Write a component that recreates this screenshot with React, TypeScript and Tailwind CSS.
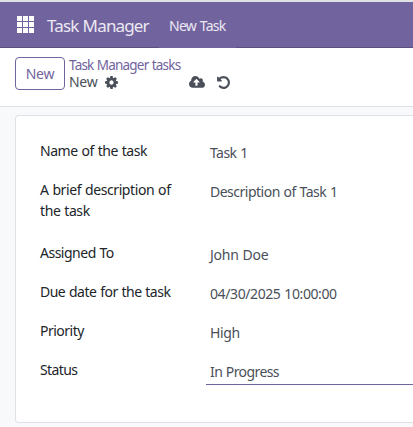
const FONT = "font-['Noto_Sans','Open_Sans',sans-serif]";

type Field = { label: string; value: string; height: string; labelSpacing: string; valueSpacing: string; active?: boolean };

const fields: Field[] = [
  { label: "Name of the task", value: "Task 1", height: "h-[39px]", labelSpacing: "tracking-[-0.45px]", valueSpacing: "tracking-[-0.55px]" },
  { label: "A brief description of the task", value: "Description of Task 1", height: "h-[63px]", labelSpacing: "tracking-[-0.4px]", valueSpacing: "tracking-[-0.5px]" },
  { label: "Assigned To", value: "John Doe", height: "h-[39px]", labelSpacing: "tracking-[-0.5px]", valueSpacing: "tracking-[-0.25px]" },
  { label: "Due date for the task", value: "04/30/2025 10:00:00", height: "h-[39px]", labelSpacing: "tracking-[-0.5px]", valueSpacing: "tracking-[-0.4px]" },
  { label: "Priority", value: "High", height: "h-[39px]", labelSpacing: "tracking-[-0.5px]", valueSpacing: "tracking-[-0.4px]" },
  { label: "Status", value: "In Progress", height: "h-[39px]", labelSpacing: "tracking-[-0.6px]", valueSpacing: "tracking-[-0.6px]", active: true },
];

function Cog() {
  return (
    <svg className="block size-[15px]" viewBox="0 0 1792 1792" fill="currentColor">
      <path d="M1152 896q0-106-75-181t-181-75-181 75-75 181 75 181 181 75 181-75 75-181zm512-109v222q0 12-8 23t-20 13l-185 28q-19 54-39 91 35 50 107 138 10 12 10 25t-9 23q-27 37-99 108t-94 71q-12 0-26-9l-138-108q-44 23-91 38-16 136-29 186-7 28-36 28h-222q-14 0-24.5-8.5t-11.5-21.5l-28-184q-49-16-90-37l-141 107q-10 9-25 9-14 0-25-11-126-114-165-168-7-10-7-23 0-12 8-23 15-21 51-66.5t54-70.5q-27-50-41-99l-183-27q-13-2-21-12.5t-8-23.5v-222q0-12 8-23t19-13l186-28q14-46 39-92-40-57-107-138-10-12-10-24 0-10 9-23 26-36 98.5-107.5t94.5-71.5q13 0 26 10l138 107q44-23 91-38 16-136 29-186 7-28 36-28h222q14 0 24.5 8.5t11.5 21.5l28 184q49 16 90 37l142-107q9-9 24-9 13 0 25 10 129 119 165 170 7 8 7 22 0 12-8 23-15 21-51 66.5t-54 70.5q26 50 41 98l183 28q13 2 21 12.5t8 23.5z" />
    </svg>
  );
}

function CloudUpload() {
  return (
    <svg className="block h-[15px] w-4" viewBox="-64 0 1920 1792" fill="currentColor">
      <path d="M1216 864q0-14-9-23l-352-352q-9-9-23-9t-23 9l-351 351q-10 12-10 24 0 14 9 23t23 9h224v352q0 13 9.5 22.5t22.5 9.5h192q13 0 22.5-9.5t9.5-22.5v-352h224q13 0 22.5-9.5t9.5-22.5zm640 288q0 159-112.5 271.5t-271.5 112.5h-1088q-185 0-316.5-131.5t-131.5-316.5q0-130 70-240t188-165q-2-30-2-43 0-212 150-362t362-150q156 0 285.5 87t188.5 231q71-62 166-62 106 0 181 75t75 181q0 76-41 138 130 31 213.5 135.5t83.5 238.5z" />
    </svg>
  );
}

function Undo() {
  return (
    <svg className="block size-[15px]" viewBox="0 0 1792 1792" fill="currentColor">
      <path d="M1664 896q0 156-61 298t-164 245-245 164-298 61q-172 0-327-72.5t-264-204.5q-7-10-6.5-22.5t8.5-20.5l137-138q10-9 25-9 16 2 23 12 73 95 179 147t225 52q104 0 198.5-40.5t163.5-109.5 109.5-163.5 40.5-198.5-40.5-198.5-109.5-163.5-163.5-109.5-198.5-40.5q-98 0-188 35.5t-160 101.5l137 138q31 30 14 69-17 40-59 40h-448q-26 0-45-19t-19-45v-448q0-42 40-59 39-17 69 14l130 129q107-101 244.5-156.5t284.5-55.5q156 0 298 61t245 164 164 245 61 298z" />
    </svg>
  );
}

export default function App() {
  return (
    <div className={`${FONT} flex h-[427px] w-full flex-col overflow-hidden bg-[#f8f9fa] text-[14px] leading-[21px] whitespace-nowrap [word-spacing:0.6px]`}>
      <header className="flex h-12 shrink-0 border-t-2 border-[#dfe1e3] bg-[#71639e] text-[#ebe8f2]">
        <div className="flex w-[159px] items-center border-b border-[#5a4f7f] pl-[17px]">
          <div className="grid grid-cols-3 gap-px">
            {Array.from({ length: 9 }, (_, i) => (
              <span key={i} className="size-[5px] bg-white" />
            ))}
          </div>
          <span className="ml-[13px] pt-px text-[17px] tracking-[-0.85px]">Task Manager</span>
        </div>
        <div className="flex w-[77px] items-center pl-[10px]">
          <span className="pt-px tracking-[-0.7px]">New Task</span>
        </div>
        <div className="flex-1 border-b border-[#5a4f7f]" />
      </header>

      <div className="flex h-[59px] shrink-0 border-b border-[#dee2e6] bg-white pt-[9px] pl-[15px]">
        <button className="flex h-[33px] w-[50px] items-center justify-center rounded-[4px] border border-[#71639e] tracking-[-0.2px] text-[#71639e]">
          New
        </button>
        <div className="ml-1 flex flex-col text-[#4a4f59]">
          <span className="h-[17px] text-[13.5px] leading-[17px] tracking-[-0.8px] text-[#71639e]">Task Manager tasks</span>
          <div className="flex h-4 items-center">
            <span className="w-[35px] leading-4 tracking-[-0.3px]">New</span>
            <Cog />
            <div className="ml-[70px] flex gap-[11px]">
              <CloudUpload />
              <Undo />
            </div>
          </div>
        </div>
      </div>

      <main className="flex-1 pt-2 pl-[15px]">
        <section className="h-[308px] rounded-l-[4px] border border-r-0 border-[#dee2e6] bg-white pt-6 pl-6">
          {fields.map((f) => (
            <div key={f.label} className={`flex ${f.height}`}>
              <span className={`w-[166px] pr-[30px] whitespace-normal text-[#212529] ${f.labelSpacing}`}>{f.label}</span>
              <span className={`h-[26px] flex-1 pt-[2px] pl-1 text-[#4a4f59] ${f.valueSpacing} ${f.active ? "border-b border-[#71639e]" : ""}`}>
                {f.value}
              </span>
            </div>
          ))}
        </section>
      </main>
    </div>
  );
}
